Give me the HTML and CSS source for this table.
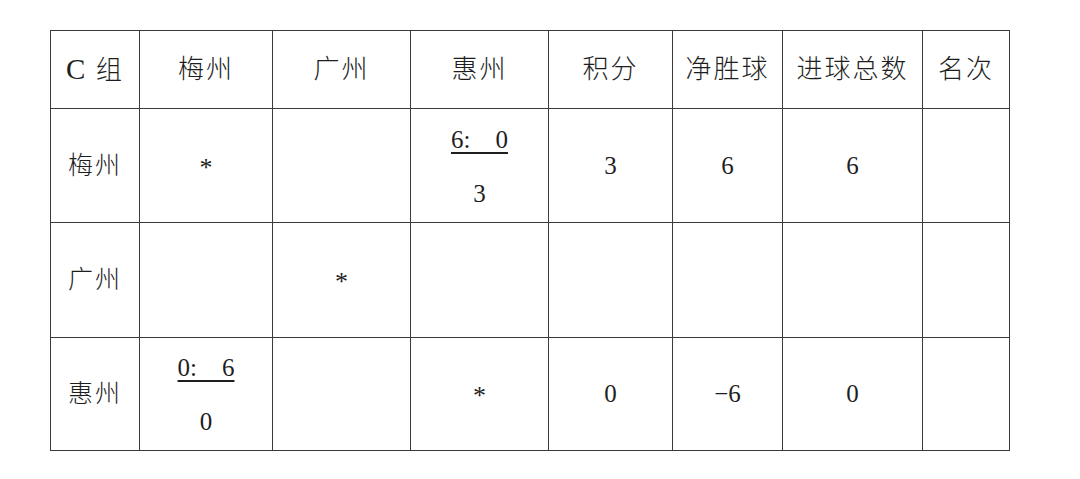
FILE: index.html
```html
<!DOCTYPE html>
<html lang="zh-CN">
<head>
<meta charset="utf-8">
<title>C组</title>
<link rel="stylesheet" href="styles.css">
</head>
<body>
<table class="grid">
  <colgroup>
    <col class="c1"><col class="c2"><col class="c3"><col class="c4">
    <col class="c5"><col class="c6"><col class="c7"><col class="c8">
  </colgroup>
  <tr class="head">
    <td><span class="latin">C</span> 组</td>
    <td>梅州</td>
    <td>广州</td>
    <td>惠州</td>
    <td>积分</td>
    <td>净胜球</td>
    <td>进球总数</td>
    <td>名次</td>
  </tr>
  <tr class="r1">
    <td class="name">梅州</td>
    <td><span class="star">*</span></td>
    <td></td>
    <td><div class="frac"><div class="score">6:&emsp;0</div><div>3</div></div></td>
    <td class="num">3</td>
    <td class="num">6</td>
    <td class="num">6</td>
    <td></td>
  </tr>
  <tr class="r2">
    <td class="name">广州</td>
    <td></td>
    <td><span class="star">*</span></td>
    <td></td>
    <td></td>
    <td></td>
    <td></td>
    <td></td>
  </tr>
  <tr class="r3">
    <td class="name">惠州</td>
    <td><div class="frac"><div class="score">0:&emsp;6</div><div>0</div></div></td>
    <td></td>
    <td><span class="star">*</span></td>
    <td class="num">0</td>
    <td class="num">&minus;6</td>
    <td class="num">0</td>
    <td></td>
  </tr>
</table>
</body>
</html>
```

FILE: styles.css
```css
html, body {
  margin: 0;
  padding: 0;
  background: #ffffff;
}

body {
  padding: 30px 0 0 50px;
  font-family: "Liberation Serif", "Noto Sans CJK SC", serif;
  color: #1e1e1e;
}

.grid {
  border-collapse: collapse;
  table-layout: fixed;
  width: 959px;
}

.c1 { width: 89px; }
.c2 { width: 133px; }
.c3 { width: 138px; }
.c4 { width: 138px; }
.c5 { width: 124px; }
.c6 { width: 110px; }
.c7 { width: 140px; }
.c8 { width: 87px; }

.grid td {
  border: 1px solid #3a3a3a;
  padding: 0;
  text-align: center;
  vertical-align: middle;
  font-size: 25px;
  line-height: 28px;
}

.head td {
  height: 77px;
  font-size: 26px;
  letter-spacing: 2px;
  font-weight: 300;
}

.latin {
  font-size: 29px;
}

.r1 td { height: 113px; }
.r2 td { height: 114px; }
.r3 td { height: 112px; }

.name {
  font-size: 26px;
  letter-spacing: 2px;
  font-weight: 300;
}

.num {
  padding-top: 4px;
}

.star {
  display: inline-block;
  vertical-align: -4px;
  font-size: 26px;
}

.frac {
  line-height: 54px;
  padding-top: 2px;
}

.score {
  display: inline-block;
  text-decoration: underline;
  text-decoration-thickness: 1.5px;
  text-underline-offset: 4px;
}
```
